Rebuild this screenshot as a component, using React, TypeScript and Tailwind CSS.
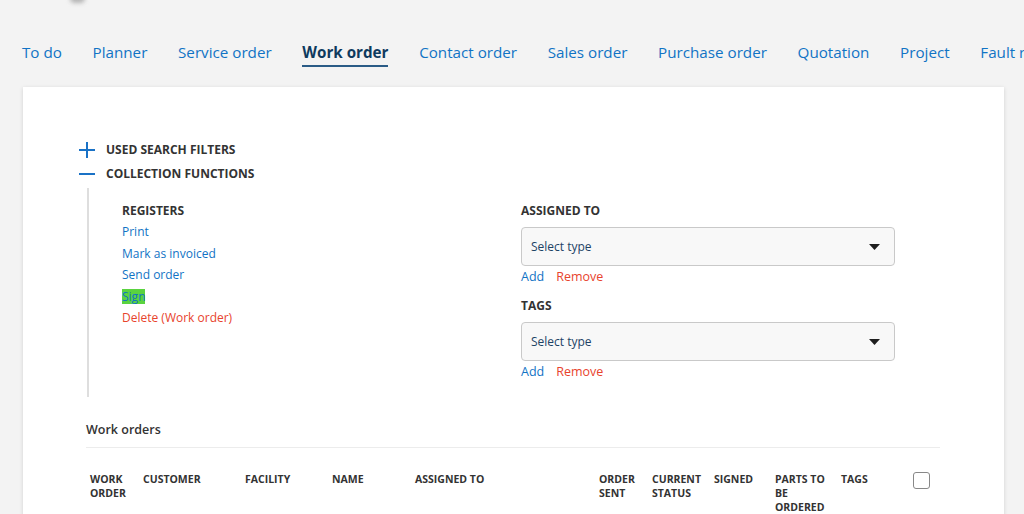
import React from 'react';

const tabs = ['To do', 'Planner', 'Service order', 'Work order', 'Contact order', 'Sales order', 'Purchase order', 'Quotation', 'Project', 'Fault report'];

const registers = [
  { label: 'Print', kind: 'link' },
  { label: 'Mark as invoiced', kind: 'link' },
  { label: 'Send order', kind: 'link' },
  { label: 'Sign', kind: 'highlight' },
  { label: 'Delete (Work order)', kind: 'danger' },
];

const columns = ['Work order', 'Customer', 'Facility', 'Name', 'Assigned to', 'Order sent', 'Current status', 'Signed', 'Parts to be ordered', 'Tags'];

const SelectField: React.FC<{ label: string }> = ({ label }) => (
  <div>
    <div className="text-[12px] leading-[16px] font-bold uppercase text-[#333]">{label}</div>
    <div className="mt-[8px] h-[39px] rounded-[4px] border border-[#c9c9c9] bg-[#f8f8f8] flex items-center justify-between pl-[9px] pr-[14px]">
      <span className="text-[12px] text-[#1d4366]">Select type</span>
      <svg width="11" height="6" viewBox="0 0 11 6"><path d="M0 0h11L5.5 6z" fill="#1e1e1e" /></svg>
    </div>
    <div className="mt-[2px] flex gap-[12px] text-[12.5px] leading-[18px]">
      <span className="text-[#1173c5]">Add</span>
      <span className="text-[#e8432d]">Remove</span>
    </div>
  </div>
);

export default function App() {
  return (
    <div className="min-h-screen bg-[#f3f3f3] relative overflow-hidden" style={{ fontFamily: '"Open Sans", "Liberation Sans", sans-serif' }}>
      <div className="absolute left-[70px] top-[-6px] w-[15px] h-[9px] rounded-full bg-[#b5b5b5] blur-[2px]"></div>
      <nav className="flex gap-[30.7px] pl-[22px] pt-[41px] whitespace-nowrap">
        {tabs.map((t) => (
          <div
            key={t}
            className={
              t === 'Work order'
                ? 'text-[15.2px] leading-[22px] pb-[2px] font-bold text-[#0e3a5e] border-b-2 border-[#2a5b86]'
                : 'text-[15.2px] leading-[22px] pb-[2px] text-[#1173c5] border-b-2 border-transparent'
            }
          >
            {t}
          </div>
        ))}
      </nav>

      <main className="mt-[20px] ml-[23px] w-[981px] bg-white shadow-[0_1px_4px_rgba(0,0,0,0.14)] pt-[51px] pl-[56px] pr-[64px] pb-[60px]">
        <div className="flex items-center gap-[11px] h-[24px]">
          <svg width="16" height="16" viewBox="0 0 16 16"><path d="M8 0v16M0 8h16" stroke="#1a72c6" strokeWidth="2" /></svg>
          <span className="text-[12px] font-bold uppercase text-[#333]">Used search filters</span>
        </div>
        <div className="flex items-center gap-[11px] h-[24px]">
          <svg width="16" height="16" viewBox="0 0 16 16"><path d="M0 8h16" stroke="#1a72c6" strokeWidth="2" /></svg>
          <span className="text-[12px] font-bold uppercase text-[#333]">Collection functions</span>
        </div>

        <div className="ml-[8px] mt-[2px] border-l-2 border-[#dedede] pl-[33px] pt-[15px] pb-[16px] flex">
          <div className="w-[399px]">
            <div className="text-[12px] leading-[16px] font-bold uppercase text-[#333]">Registers</div>
            <div className="mt-[2px] flex flex-col items-start text-[12px] leading-[21.5px]">
              {registers.map((r) => (
                <span
                  key={r.label}
                  className={
                    r.kind === 'danger'
                      ? 'text-[#e8432d]'
                      : r.kind === 'highlight'
                      ? 'text-[#1173c5] bg-[#5ad33f] leading-[15px] my-[3.25px]'
                      : 'text-[#1173c5]'
                  }
                >
                  {r.label}
                </span>
              ))}
            </div>
          </div>
          <div className="w-[374px] flex flex-col gap-[12px]">
            <SelectField label="Assigned to" />
            <SelectField label="Tags" />
          </div>
        </div>

        <div className="ml-[7px] mt-[24px]">
          <div className="text-[12.5px] leading-[18px] font-semibold text-[#333] pb-[8px] border-b border-[#ececec]">Work orders</div>
          <div className="mt-[24px] pl-[4px] pr-[10px] grid grid-cols-[53px_102px_87px_83px_184px_53px_62px_61px_66px_1fr_auto] items-start">
            {columns.map((c) => (
              <div key={c} className="pr-[6px] text-[10.5px] leading-[14px] font-bold uppercase text-[#333]">
                {c}
              </div>
            ))}
            <div className="w-[17px] h-[17px] rounded-[3px] border border-[#888] bg-white"></div>
          </div>
        </div>
      </main>
    </div>
  );
}
